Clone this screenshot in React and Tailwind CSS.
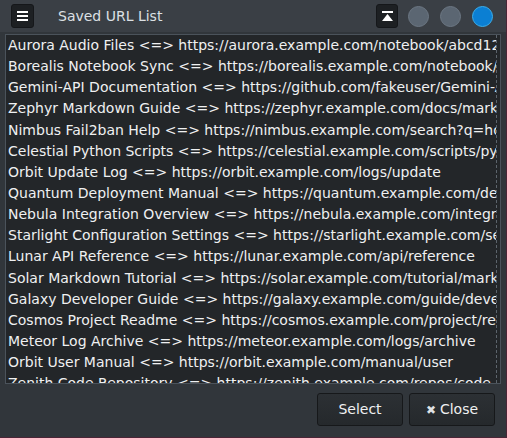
const items = [
  ['Aurora Audio Files', 'https://aurora.example.com/notebook/abcd1234'],
  ['Borealis Notebook Sync', 'https://borealis.example.com/notebook/sync'],
  ['Gemini-API Documentation', 'https://github.com/fakeuser/Gemini-API'],
  ['Zephyr Markdown Guide', 'https://zephyr.example.com/docs/markdown'],
  ['Nimbus Fail2ban Help', 'https://nimbus.example.com/search?q=how'],
  ['Celestial Python Scripts', 'https://celestial.example.com/scripts/python'],
  ['Orbit Update Log', 'https://orbit.example.com/logs/update'],
  ['Quantum Deployment Manual', 'https://quantum.example.com/deploy'],
  ['Nebula Integration Overview', 'https://nebula.example.com/integration'],
  ['Starlight Configuration Settings', 'https://starlight.example.com/settings'],
  ['Lunar API Reference', 'https://lunar.example.com/api/reference'],
  ['Solar Markdown Tutorial', 'https://solar.example.com/tutorial/markdown'],
  ['Galaxy Developer Guide', 'https://galaxy.example.com/guide/developer'],
  ['Cosmos Project Readme', 'https://cosmos.example.com/project/readme'],
  ['Meteor Log Archive', 'https://meteor.example.com/logs/archive'],
  ['Orbit User Manual', 'https://orbit.example.com/manual/user'],
  ['Zenith Code Repository', 'https://zenith.example.com/repos/code'],
]

export default function App() {
  return (
    <div
      className="w-[507px] h-[438px] flex flex-col bg-[#31363b] border-r border-b border-r-[#4a2536] border-b-[#4a2536] text-[#eff0f1] overflow-hidden"
      style={{ fontFamily: '"DejaVu Sans", sans-serif' }}
    >
      {/* title bar */}
      <div className="h-[32px] flex items-center pl-[11px] pr-[13px] bg-[#3a3f45]">
        <button className="w-[23px] h-[24px] rounded-[3px] bg-[#1d2023] border border-[#15171a] flex flex-col items-center justify-center gap-[2px]">
          <span className="w-[11px] h-[2px] bg-white" />
          <span className="w-[11px] h-[2px] bg-white" />
          <span className="w-[11px] h-[2px] bg-white" />
        </button>
        <span className="ml-[24px] text-[14px] text-[#dce0e4]">Saved URL List</span>
        <div className="ml-auto flex items-center">
          <button className="w-[22px] h-[24px] rounded-[3px] bg-[#1d2023] border border-[#15171a] flex flex-col items-center justify-center gap-[1px]">
            <span className="w-[11px] h-[2px] bg-white" />
            <svg width="11" height="7" viewBox="0 0 11 7">
              <polygon points="5.5,0 11,7 0,7" fill="#fff" />
            </svg>
          </button>
          <span className="ml-[10px] w-[21px] h-[21px] rounded-full bg-[#5b6672] border border-[#6c7783]" />
          <span className="ml-[11px] w-[21px] h-[21px] rounded-full bg-[#5b6672] border border-[#6c7783]" />
          <span className="ml-[11px] w-[21px] h-[21px] rounded-full bg-[#0b7fd3] border border-[#3daee9]" />
        </div>
      </div>

      {/* list */}
      <div className="mx-[5px] mt-[2px] h-[350px] border border-[#4b535b] bg-[#232629] flex">
        <div className="flex-1 mr-[3px] border-r border-dashed border-[#5c646c] overflow-hidden pl-[2px]">
          {items.map(([name, url]) => (
            <div key={name} className="h-[21.15px] leading-[21px] text-[14px] whitespace-nowrap">
              {name} &lt;=&gt; {url}
            </div>
          ))}
        </div>
      </div>

      {/* buttons */}
      <div className="flex justify-end gap-[6px] pr-[11px] mt-[9px]">
        <button className="w-[86px] h-[33px] rounded-[3px] border border-[#16181a] bg-gradient-to-b from-[#2c3034] to-[#25292c] text-[14px] text-[#eff0f1]">
          Select
        </button>
        <button className="w-[86px] h-[33px] rounded-[3px] border border-[#16181a] bg-gradient-to-b from-[#2c3034] to-[#25292c] text-[14px] text-[#eff0f1] flex items-center justify-center gap-[4px]">
          <span className="text-[12px] text-[#dfe2e5]">✖</span>
          Close
        </button>
      </div>
    </div>
  )
}
